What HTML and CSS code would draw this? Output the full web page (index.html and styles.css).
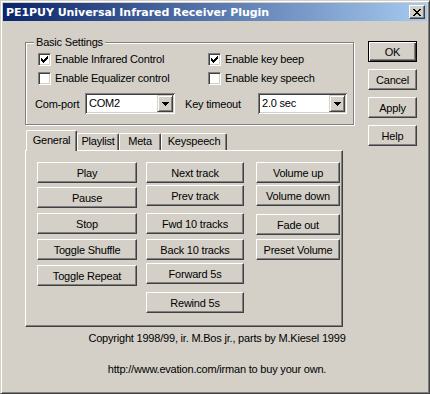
FILE: index.html
```html
<!DOCTYPE html>
<html lang="en">
<head>
    <meta charset="UTF-8">
    <title>PE1PUY Universal Infrared Receiver Plugin</title>
    <link rel="stylesheet" href="styles.css">
</head>
<body>
    <div class="window">
        <div class="titlebar">
            <span class="title">PE1PUY Universal Infrared Receiver Plugin</span>
            <button class="close-btn">
                <svg width="8" height="7" viewBox="0 0 8 7" shape-rendering="crispEdges">
                    <path d="M0 0h2v1h1v1h2v-1h1v-1h2v1h-1v1h-1v1h-1v1h1v1h1v1h1v1h-2v-1h-1v-1h-2v1h-1v1h-2v-1h1v-1h1v-1h1v-1h-1v-1h-1v-1h-1z" fill="#000"/>
                </svg>
            </button>
        </div>

        <div class="client">
            <div class="main">
                <div class="left">
                    <div class="groupbox">
                        <span class="legend">Basic Settings</span>
                        <div class="check-row">
                            <label class="check"><span class="box checked"><svg width="7" height="7" viewBox="0 0 7 7" shape-rendering="crispEdges"><path d="M0 2h1v3h-1zM1 3h1v3h-1zM2 4h1v3h-1zM3 3h1v3h-1zM4 2h1v3h-1zM5 1h1v3h-1zM6 0h1v3h-1z" fill="#000"/></svg></span>Enable Infrared Control</label>
                            <label class="check"><span class="box checked"><svg width="7" height="7" viewBox="0 0 7 7" shape-rendering="crispEdges"><path d="M0 2h1v3h-1zM1 3h1v3h-1zM2 4h1v3h-1zM3 3h1v3h-1zM4 2h1v3h-1zM5 1h1v3h-1zM6 0h1v3h-1z" fill="#000"/></svg></span>Enable key beep</label>
                        </div>
                        <div class="check-row">
                            <label class="check"><span class="box"></span>Enable Equalizer control</label>
                            <label class="check"><span class="box"></span>Enable key speech</label>
                        </div>
                        <div class="combo-row">
                            <span class="combo-label">Com-port</span>
                            <div class="combo combo-port">
                                <span class="combo-value">COM2</span>
                                <span class="combo-arrow"><svg width="7" height="4" viewBox="0 0 7 4" shape-rendering="crispEdges"><path d="M0 0h7v1h-1v1h-1v1h-1v1h-1v-1h-1v-1h-1v-1h-1z" fill="#000"/></svg></span>
                            </div>
                            <span class="combo-label timeout-label">Key timeout</span>
                            <div class="combo combo-timeout">
                                <span class="combo-value">2.0 sec</span>
                                <span class="combo-arrow"><svg width="7" height="4" viewBox="0 0 7 4" shape-rendering="crispEdges"><path d="M0 0h7v1h-1v1h-1v1h-1v1h-1v-1h-1v-1h-1v-1h-1z" fill="#000"/></svg></span>
                            </div>
                        </div>
                    </div>

                    <div class="tabs">
                        <div class="tab-strip">
                            <span class="tab active tab-general">General</span>
                            <span class="tab tab-playlist">Playlist</span>
                            <span class="tab tab-meta">Meta</span>
                            <span class="tab tab-keyspeech">Keyspeech</span>
                        </div>
                        <div class="tab-panel">
                            <div class="btn-col col-1">
                                <button class="btn">Play</button>
                                <button class="btn">Pause</button>
                                <button class="btn">Stop</button>
                                <button class="btn">Toggle Shuffle</button>
                                <button class="btn">Toggle Repeat</button>
                            </div>
                            <div class="btn-col col-2">
                                <button class="btn">Next track</button>
                                <button class="btn">Prev track</button>
                                <button class="btn">Fwd 10 tracks</button>
                                <button class="btn">Back 10 tracks</button>
                                <button class="btn">Forward 5s</button>
                                <button class="btn">Rewind 5s</button>
                            </div>
                            <div class="btn-col col-3">
                                <button class="btn">Volume up</button>
                                <button class="btn">Volume down</button>
                                <button class="btn">Fade out</button>
                                <button class="btn">Preset Volume</button>
                            </div>
                        </div>
                    </div>
                </div>

                <div class="side">
                    <button class="btn default">OK</button>
                    <button class="btn">Cancel</button>
                    <button class="btn">Apply</button>
                    <button class="btn">Help</button>
                </div>
            </div>

            <div class="footer">
                <p class="copyright">Copyright 1998/99, ir. M.Bos jr., parts by M.Kiesel 1999</p>
                <p class="url">http://www.evation.com/irman to buy your own.</p>
            </div>
        </div>
    </div>
</body>
</html>
```

FILE: styles.css
```css
body {
    margin: 0;
    background-color: #d4d0c8;
    font-family: "Liberation Sans", Arial, sans-serif;
    font-size: 11px;
    letter-spacing: -0.2px;
    color: #000;
}
.window {
    width: 430px;
    height: 394px;
    box-sizing: border-box;
    padding: 2px;
    background-color: #d4d0c8;
    border: 1px solid;
    border-color: #d4d0c8 #404040 #404040 #d4d0c8;
    box-shadow: inset 1px 1px #fff, inset -1px -1px #808080;
}
.titlebar {
    height: 18px;
    display: flex;
    align-items: center;
    justify-content: space-between;
    padding: 0 2px 0 3px;
    background: linear-gradient(to right, #0a246a, #a6caf0);
    color: #fff;
    font-family: "DejaVu Sans", sans-serif;
    font-weight: bold;
    font-size: 11px;
    letter-spacing: -0.05px;
}
.close-btn {
    width: 16px;
    height: 14px;
    padding: 0;
    display: flex;
    align-items: center;
    justify-content: center;
    background-color: #d4d0c8;
    border: 1px solid;
    border-color: #fff #404040 #404040 #fff;
    box-shadow: inset -1px -1px #808080;
}
.client {
    padding: 21px 0 0 22px;
}
.main {
    display: flex;
    align-items: flex-start;
}
.left {
    width: 329px;
}

/* group box */
.groupbox {
    position: relative;
    width: 329px;
    height: 83px;
    box-sizing: border-box;
    padding: 10px 0 0 12px;
    border: 1px solid #808080;
    box-shadow: inset 1px 1px #fff, 1px 1px #fff;
}
.legend {
    position: absolute;
    top: -7px;
    left: 8px;
    padding: 0 2px;
    line-height: 13px;
    background-color: #d4d0c8;
}
.check-row {
    display: flex;
    height: 19px;
}
.check {
    display: flex;
    flex: none;
    width: 170px;
    line-height: 13px;
}
.check + .check {
    width: 130px;
}
.box {
    width: 13px;
    height: 13px;
    box-sizing: border-box;
    margin-right: 4px;
    display: flex;
    align-items: center;
    justify-content: center;
    background-color: #fff;
    border: 1px solid;
    border-color: #808080 #fff #fff #808080;
    box-shadow: inset 1px 1px #404040, inset -1px -1px #d4d0c8;
}
.combo-row {
    display: flex;
    align-items: center;
    margin: 2px 0 0 -3px;
}
.combo-label {
    width: 50px;
}
.timeout-label {
    width: 73px;
    margin-left: 10px;
}
.combo {
    height: 21px;
    box-sizing: border-box;
    display: flex;
    align-items: stretch;
    justify-content: space-between;
    padding: 2px;
    background-color: #fff;
    border: 0;
    box-shadow: inset 1px 1px #808080, inset -1px -1px #fff, inset 2px 2px #404040, inset -2px -2px #d4d0c8;
}
.combo-port {
    width: 90px;
}
.combo-timeout {
    width: 89px;
}
.combo-value {
    padding-left: 2px;
    line-height: 17px;
}
.combo-arrow {
    width: 16px;
    box-sizing: border-box;
    display: flex;
    align-items: center;
    justify-content: center;
    background-color: #d4d0c8;
    border: 1px solid;
    border-color: #d4d0c8 #404040 #404040 #d4d0c8;
    box-shadow: inset 1px 1px #fff, inset -1px -1px #808080;
}

/* tab control */
.tabs {
    margin-top: 5px;
}
.tab-strip {
    display: flex;
    align-items: flex-end;
    height: 20px;
    padding-left: 1px;
}
.tab {
    height: 17px;
    box-sizing: border-box;
    line-height: 15px;
    text-align: center;
    border: 1px solid;
    border-bottom: 0;
    border-color: #fff #404040 #fff #fff;
    border-radius: 2px 2px 0 0;
    box-shadow: inset -1px 0 #808080;
}
.tab.active {
    position: relative;
    z-index: 1;
    height: 21px;
    margin-bottom: -1px;
    line-height: 18px;
    background-color: #d4d0c8;
}
.tab-general {
    width: 51px;
}
.tab-playlist {
    width: 42px;
}
.tab-meta {
    width: 42px;
}
.tab-keyspeech {
    width: 66px;
}
.tab-panel {
    width: 318px;
    height: 177px;
    box-sizing: border-box;
    display: flex;
    align-items: flex-start;
    padding: 11px 0 0 11px;
    border: 1px solid;
    border-color: #fff #404040 #404040 #fff;
    box-shadow: inset -1px -1px #808080;
}
.btn-col {
    display: flex;
    flex-direction: column;
}
.col-1 {
    width: 100px;
}
.col-2 {
    width: 98px;
    margin-left: 9px;
}
.col-3 {
    width: 84px;
    margin-left: 12px;
}
.btn {
    height: 21px;
    padding: 0;
    font-family: inherit;
    font-size: 11px;
    letter-spacing: inherit;
    color: #000;
    background-color: #d4d0c8;
    border: 1px solid;
    border-color: #fff #404040 #404040 #fff;
    box-shadow: inset -1px -1px #808080;
}
.col-1 .btn:nth-child(2) { margin-top: 4px; }
.col-1 .btn:nth-child(3) { margin-top: 5px; }
.col-1 .btn:nth-child(4) { margin-top: 5px; }
.col-1 .btn:nth-child(5) { margin-top: 5px; }
.col-2 .btn:nth-child(2) { margin-top: 2px; }
.col-2 .btn:nth-child(3) { margin-top: 7px; }
.col-2 .btn:nth-child(4) { margin-top: 5px; }
.col-2 .btn:nth-child(5) { margin-top: 3px; }
.col-2 .btn:nth-child(6) { margin-top: 8px; }
.col-3 .btn:nth-child(2) { margin-top: 2px; }
.col-3 .btn:nth-child(3) { margin-top: 8px; }
.col-3 .btn:nth-child(4) { margin-top: 4px; }

/* OK / Cancel column */
.side {
    display: flex;
    flex-direction: column;
    margin: -1px 0 0 14px;
}
.side .btn {
    width: 49px;
    margin-bottom: 7px;
}
.side .btn.default {
    border-color: #000;
    box-shadow: inset 1px 1px #fff, inset -1px -1px #404040, inset -2px -2px #808080;
}

.footer {
    width: 384px;
    text-align: center;
}
.footer p {
    margin: 0;
    line-height: 13px;
}
.copyright {
    padding-top: 5px;
}
.url {
    padding-top: 18px;
}
```
